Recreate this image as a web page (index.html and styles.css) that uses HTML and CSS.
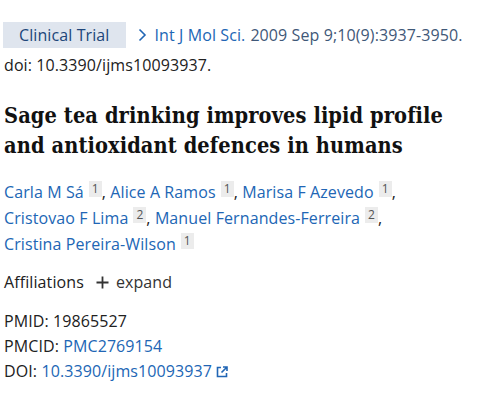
FILE: index.html
```html
<!DOCTYPE html>
<html lang="en">
<head>
<meta charset="utf-8">
<title>Sage tea drinking improves lipid profile and antioxidant defences in humans</title>
<link rel="stylesheet" href="styles.css">
</head>
<body>
<main class="article">
  <div class="citation">
    <span class="pub-type">Clinical Trial</span>
    <span class="journal">
      <svg class="chevron" width="9" height="14" viewBox="0 0 9 14" aria-hidden="true"><path d="M1.5 1.5 L7 7 L1.5 12.5" fill="none" stroke="currentColor" stroke-width="1.6"/></svg>
      <a class="journal-name" href="#">Int J Mol Sci.</a>
      <span class="cit">2009 Sep 9;10(9):3937-3950.</span>
    </span>
  </div>
  <div class="doi-line">doi: 10.3390/ijms10093937.</div>

  <h1 class="title">Sage tea drinking improves lipid profile and antioxidant defences in humans</h1>

  <div class="authors">
    <span class="author"><a href="#">Carla M Sá</a><sup class="aff">1</sup>,</span>
    <span class="author"><a href="#">Alice A Ramos</a><sup class="aff">1</sup>,</span>
    <span class="author"><a href="#">Marisa F Azevedo</a><sup class="aff">1</sup>,</span>
    <span class="author"><a href="#">Cristovao F Lima</a><sup class="aff">2</sup>,</span>
    <span class="author"><a href="#">Manuel Fernandes-Ferreira</a><sup class="aff">2</sup>,</span>
    <span class="author"><a href="#">Cristina Pereira-Wilson</a><sup class="aff">1</sup></span>
  </div>

  <div class="affiliations">
    <span>Affiliations</span>
    <span class="expand"><svg class="plus" width="13" height="13" viewBox="0 0 13 13" aria-hidden="true"><path d="M6.5 0.5 V12.5 M0.5 6.5 H12.5" fill="none" stroke="currentColor" stroke-width="1.8"/></svg>expand</span>
  </div>

  <ul class="ids">
    <li>PMID: 19865527</li>
    <li>PMCID: <a href="#">PMC2769154</a></li>
    <li>DOI: <a href="#">10.3390/ijms10093937</a><svg class="ext" width="14" height="14" viewBox="0 0 14 14" aria-hidden="true"><path d="M6 2.5 H2.5 V11.5 H11.5 V8" fill="none" stroke="currentColor" stroke-width="1.6"/><path d="M8 2 H12 V6 M12 2 L6.5 7.5" fill="none" stroke="currentColor" stroke-width="1.6"/></svg></li>
  </ul>
</main>
</body>
</html>
```

FILE: styles.css
```css
html, body {
  margin: 0;
  padding: 0;
  background: #ffffff;
}

body {
  font-family: "Open Sans", "Noto Sans", sans-serif;
  font-size: 16px;
  letter-spacing: 0.1px;
  color: #212121;
}

a {
  color: #2166b5;
  text-decoration: none;
}

.article {
  padding: 22px 0 0 4px;
}

.citation {
  display: flex;
  align-items: center;
  gap: 12px;
  height: 26px;
}

.pub-type {
  background: #dfe5ee;
  color: #20467a;
  height: 26px;
  line-height: 26px;
  padding: 0 17px 0 16px;
  margin-left: -1px;
}

.journal {
  display: flex;
  align-items: center;
  gap: 5px;
  color: #2166b5;
}

.chevron {
  color: #2166b5;
  margin-right: 2px;
}

.cit {
  color: #3f5878;
}

.doi-line {
  margin-top: 5px;
  line-height: 24px;
}

.title {
  font-family: "DejaVu Serif", serif;
  font-stretch: condensed;
  font-size: 21.6px;
  font-weight: bold;
  line-height: 30px;
  margin: 24px 0 18px;
  color: #111111;
  max-width: 470px;
}

.authors {
  line-height: 26px;
  max-width: 440px;
}

.author {
  white-space: nowrap;
}

.aff {
  display: inline-block;
  background: #ececec;
  color: #555555;
  font-size: 12px;
  line-height: 14px;
  padding: 1px 3px;
  margin-left: 5px;
  vertical-align: 5px;
}

.affiliations {
  margin-top: 13px;
  display: flex;
  gap: 12px;
  line-height: 24px;
}

.expand {
  display: flex;
  align-items: center;
  gap: 7px;
  color: #333333;
}

.ids {
  list-style: none;
  margin: 15px 0 0;
  padding: 0;
  line-height: 25px;
}

.ext {
  color: #2166b5;
  margin-left: 3px;
  vertical-align: -2px;
}
```
